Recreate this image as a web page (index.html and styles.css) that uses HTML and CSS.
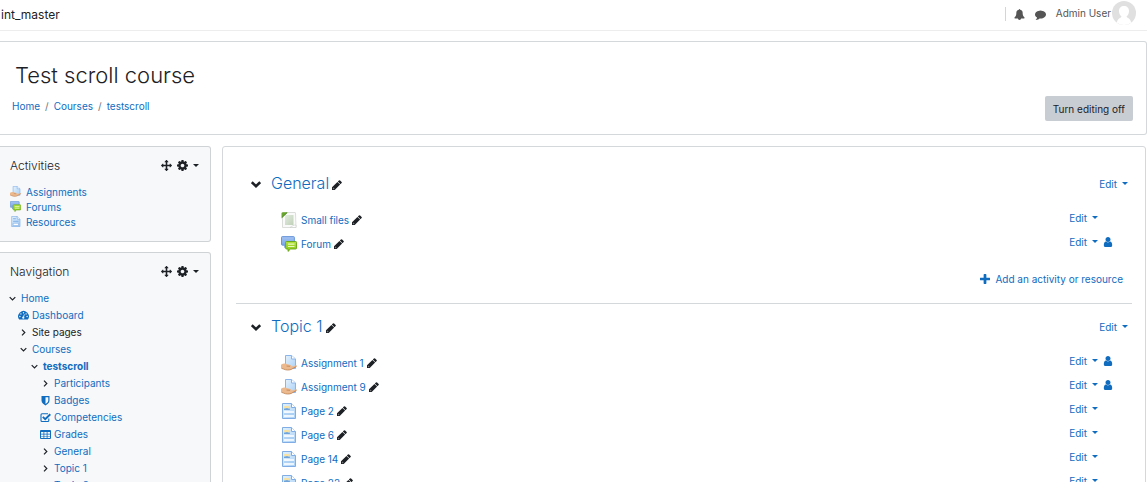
FILE: index.html
```html
<!DOCTYPE html>
<html lang="en">

<head>
    <meta charset="UTF-8">
    <title>Test scroll course</title>
    <link rel="stylesheet" href="styles.css">
</head>

<body>

    <!-- icons used on the page -->
    <svg class="sprite" aria-hidden="true">
        <defs>
            <linearGradient id="blue" x1="0" y1="0" x2="1" y2="1">
                <stop offset="0" stop-color="#e4f2fd" />
                <stop offset="1" stop-color="#a9d0f5" />
            </linearGradient>
            <linearGradient id="bubble" x1="0" y1="0" x2="0" y2="1">
                <stop offset="0" stop-color="#a3c3f3" />
                <stop offset="1" stop-color="#6f9fe3" />
            </linearGradient>
            <linearGradient id="lime" x1="0" y1="0" x2="0" y2="1">
                <stop offset="0" stop-color="#b5e53c" />
                <stop offset="1" stop-color="#86c51a" />
            </linearGradient>
            <linearGradient id="file" x1="0" y1="0" x2="1" y2="1">
                <stop offset="0" stop-color="#e3ecdf" />
                <stop offset="1" stop-color="#bfd0b8" />
            </linearGradient>
        </defs>
        <symbol id="bell" viewBox="0 0 1792 1792"><path d="M1728 1408q0 52-38 90t-90 38h-448q0 106-75 181t-181 75-181-75-75-181h-448q-52 0-90-38t-38-90q50-42 91-88t85-119.500 74.500-158.500 50-206 19.500-260q0-152 117-282.500t307-158.500q-8-19-8-39 0-40 28-68t68-28 68 28 28 68q0 20-8 39 190 28 307 158.500t117 282.500q0 139 19.500 260t50 206 74.500 158.500 85 119.500 91 88z" /></symbol>
        <symbol id="comment" viewBox="0 0 1792 1792"><path d="M1792 896q0 174-120 321.500t-326 233-450 85.500q-70 0-145-8-198 175-460 242-49 14-114 22-17 2-30.500-9t-17.500-29v-1q-3-4-.5-12t2-10 4.500-9.500l6-9 7-8.500 8-9q7-8 31-34.500t34.500-38 31-39.500 32.500-51 27-59 26-76q-157-89-247.500-220t-90.500-281q0-130 71-248.500t191-204.500 286-136.500 348-50.500 348 50.500 286 136.500 191 204.500 71 248.500z" /></symbol>
        <symbol id="move" viewBox="0 0 1792 1792"><path d="M1792 896q0 26-19 45l-256 256q-19 19-45 19t-45-19-19-45v-128h-384v384h128q26 0 45 19t19 45-19 45l-256 256q-19 19-45 19t-45-19l-256-256q-19-19-19-45t19-45 45-19h128v-384h-384v128q0 26-19 45t-45 19-45-19l-256-256q-19-19-19-45t19-45l256-256q19-19 45-19t45 19 19 45v128h384v-384h-128q-26 0-45-19t-19-45 19-45l256-256q19-19 45-19t45 19l256 256q19 19 19 45t-19 45-45 19h-128v384h384v-128q0-26 19-45t45-19 45 19l256 256q19 19 19 45z" /></symbol>
        <symbol id="cog" viewBox="128 128 1536 1536"><path d="M1152 896q0-106-75-181t-181-75-181 75-75 181 75 181 181 75 181-75 75-181zm512-109v222q0 12-8 23t-20 13l-185 28q-19 54-39 91 35 50 107 138 10 12 10 25t-9 23q-27 37-99 108t-94 71q-12 0-26-9l-138-108q-44 23-91 38-16 136-29 186-7 28-36 28h-222q-14 0-24.500-8.500t-11.500-21.500l-28-184q-49-16-90-37l-141 107q-10 9-25 9-14 0-25-11-126-114-165-168-7-10-7-23 0-12 8-23 15-21 51-66.500t54-70.500q-27-50-41-99l-183-27q-13-2-21-12.500t-8-23.500v-222q0-12 8-23t19-13l186-28q14-46 39-92-40-57-107-138-10-12-10-24 0-10 9-23 26-36 98.500-107.500t94.500-71.500q13 0 26 10l138 107q44-23 91-38 16-136 29-186 7-28 36-28h222q14 0 24.500 8.500t11.500 21.500l28 184q49 16 90 37l142-107q9-9 24-9 13 0 25 10 129 119 165 170 7 8 7 22 0 12-8 23-15 21-51 66.500t-54 70.500q26 50 41 98l183 28q13 2 21 12.500t8 23.500z" /></symbol>
        <symbol id="user" viewBox="128 128 1536 1536"><path d="M1536 1399q0 109-62.500 187t-150.500 78h-854q-88 0-150.500-78t-62.500-187q0-85 8.500-160.500t31.500-152 58.500-131 94-89 134.500-34.500q131 128 313 128t313-128q76 0 134.500 34.500t94 89 58.500 131 31.500 152 8.500 160.500zm-256-887q0 159-112.500 271.500t-271.500 112.500-271.500-112.500-112.500-271.500 112.500-271.500 271.500-112.500 271.500 112.500 112.500 271.500z" /></symbol>
        <symbol id="pencil" viewBox="128 128 1536 1536"><path d="M430 1536l60-60-174-174-60 60v46h128v128h46zM960 416l416 416-832 832h-416v-416zm683 96q0 53-37 90l-166 166-416-416 166-165q36-38 90-38 53 0 91 38l235 234q37 39 37 91z" /></symbol>
        <symbol id="plus" viewBox="192 128 1408 1408"><path d="M1600 736v192q0 40-28 68t-68 28h-416v416q0 40-28 68t-68 28h-192q-40 0-68-28t-28-68v-416h-416q-40 0-68-28t-28-68v-192q0-40 28-68t68-28h416v-416q0-40 28-68t68-28h192q40 0 68 28t28 68v416h416q40 0 68 28t28 68z" /></symbol>
        <symbol id="chevron" viewBox="0 0 10 10"><path d="M.8 3.200L5 7.300L9.200 3.200" fill="none" stroke="currentColor" stroke-width="2.600" /></symbol>
        <symbol id="down" viewBox="0 0 11 11"><path d="M2.700 4.200L5.500 7L8.300 4.200" fill="none" stroke="currentColor" stroke-width="1.200" /></symbol>
        <symbol id="right" viewBox="0 0 11 11"><path d="M4 2.700L6.800 5.500L4 8.300" fill="none" stroke="currentColor" stroke-width="1.200" /></symbol>
        <symbol id="dashboard" viewBox="0 0 11 11">
            <path d="M1.200 9.500A5.300 5.300 0 1 1 9.800 9.500Z" />
            <g fill="#f7f8fa"><circle cx="1.900" cy="6.500" r=".7" /><circle cx="2.900" cy="3.900" r=".7" /><circle cx="5.500" cy="2.700" r=".7" /><circle cx="8.100" cy="3.900" r=".7" /><circle cx="9.100" cy="6.500" r=".7" /></g>
            <path d="M5.300 7.600L6.400 4.300" stroke="#f7f8fa" stroke-width=".8" /><circle cx="5.300" cy="7.700" r="1.100" fill="#f7f8fa" />
        </symbol>
        <symbol id="shield" viewBox="0 0 11 11"><path fill-rule="evenodd" d="M1.500 1H9.500V5.500C9.500 8 7.200 9.500 5.500 10.400C3.800 9.500 1.500 8 1.500 5.500ZM5.500 2.200V9C7 8 8.300 7 8.300 5.500V2.200Z" /></symbol>
        <symbol id="check" viewBox="0 0 11 11"><path d="M8.800 6.500V8.500Q8.800 9.500 7.800 9.500H2Q1 9.500 1 8.500V2.800Q1 1.800 2 1.800H8" fill="none" stroke="currentColor" stroke-width="1.100" /><path d="M2.800 4.900L5.200 7.200L10.300 2.200" fill="none" stroke="currentColor" stroke-width="1.900" /></symbol>
        <symbol id="table" viewBox="0 0 11 11"><path fill-rule="evenodd" d="M1 1H10Q11 1 11 2V9Q11 10 10 10H1Q0 10 0 9V2Q0 1 1 1ZM1 3V4.700H3.500V3ZM4.300 3V4.700H6.700V3ZM7.500 3V4.700H10V3ZM1 5.400V6.900H3.500V5.400ZM4.300 5.400V6.900H6.700V5.400ZM7.500 5.400V6.900H10V5.400ZM1 7.600V9.100H3.500V7.600ZM4.300 7.600V9.100H6.700V7.600ZM7.500 7.600V9.100H10V7.600Z" /></symbol>
        <symbol id="assign" viewBox="0 0 16 16">
            <path d="M4.500 .5H10.500L14.500 4V13.500H4.500Z" fill="url(#blue)" stroke="#8ab4ea" />
            <path d="M10.500 .5V4H14.500" fill="#fff" stroke="#8ab4ea" />
            <path d="M0 9.700C2 8.500 4 8.300 5.500 9L9.500 10C10.400 10.500 10 11.300 9 11.300L12 11.200L15 10.200C16.200 10.200 16 11.200 15.200 11.700L10.500 14.500C8 15.500 4.500 15.200 2.500 14L0 13.300Z" fill="#ecb98e" />
            <path d="M.5 13.300L2.700 14.100C5 15.300 8 15.300 10.300 14.400L15.500 11.300M5.500 11L9 11.300" fill="none" stroke="#bd8356" stroke-width=".8" />
        </symbol>
        <symbol id="forum" viewBox="0 0 16 16">
            <path d="M1.300 .6H12.500Q13.400 .6 13.400 1.500V8.500H6L3.800 11.500V9.200H1.300Q.5 9.200 .5 8.300V1.500Q.5 .6 1.300 .6Z" fill="url(#bubble)" stroke="#608fd5" stroke-width=".9" />
            <path d="M5.500 5.500H14.800Q15.500 5.500 15.500 6.300V12.200Q15.500 13 14.800 13H9.500L7 15.400V13H5.500Q4.600 13 4.600 12.200V6.300Q4.600 5.500 5.500 5.500Z" fill="url(#lime)" stroke="#64a513" stroke-width=".9" />
            <path d="M7 8.200H13.500M7 10.500H13.500" stroke="#e8f8bd" stroke-width="1.200" />
        </symbol>
        <symbol id="page" viewBox="0 0 16 16">
            <path d="M1.500 .5H10.500L14.500 4.500V15.500H1.500Z" fill="url(#blue)" stroke="#80ade5" />
            <path d="M10.500 .5V4.500H14.500" fill="#fff" stroke="#80ade5" />
            <path d="M3 3H9V7H3Z" fill="#a8cff2" /><path d="M3 3H9V4.500L6 6L3 5Z" fill="#f7e2a5" /><path d="M3 6L6 5L9 6.500V7H3Z" fill="#6fa3da" />
            <path d="M3 9H13M3 13H13" stroke="#fff" stroke-width="1.500" /><path d="M3 11H13" stroke="#9cc6ee" />
        </symbol>
        <symbol id="resource" viewBox="0 0 16 16">
            <path d="M2.500 .5H10.500L14.500 4.500V15.500H2.500Z" fill="url(#blue)" stroke="#80ade5" />
            <path d="M10.500 .5V4.500H14.500" fill="#fff" stroke="#80ade5" />
            <path d="M4.500 4H8.500M4.500 7.500H12.500" stroke="#80ade5" stroke-width="1.500" /><path d="M4.500 10.500H12.500V14H4.500Z" fill="#fff" stroke="#80ade5" />
        </symbol>
        <symbol id="smallfile" viewBox="0 0 16 16">
            <path d="M2 .5H14Q14.500 .5 14.500 1L15 15.500H1.500V1Z" fill="#fafafa" stroke="#dcdedb" />
            <path d="M4 3H12.500V13H4Z" fill="url(#file)" />
            <path d="M9 15.500C11 14 13 13 15 13V15.500Z" fill="#fff" stroke="#c8cbc7" stroke-width=".6" />
            <path d="M.5 6V1.500Q.5 .3 2 .3H6.500Z" fill="#69a62e" /><path d="M.8 5.700L6.200 .6" stroke="#3f7d12" stroke-width=".9" />
        </symbol>
        <symbol id="avatar" viewBox="0 0 24 24">
            <circle cx="12" cy="12" r="12" fill="#e0e0e0" />
            <path d="M12 5C15 5 17 7 17 10C17 12.500 16 14.500 14.500 15.500C14.700 17 19 17.500 19 21.700Q16 24 12 24T5 21.700C5 17.500 9.300 17 9.500 15.500C8 14.500 7 12.500 7 10C7 7 9 5 12 5Z" fill="#fff" />
        </symbol>
    </svg>

    <nav class="topbar">
        <a class="brand" href="#">int_master</a>
        <div class="usermenu">
            <button class="notice" aria-label="Notifications"><svg><use href="#bell" /></svg></button>
            <button class="notice" aria-label="Messages"><svg><use href="#comment" /></svg></button>
            <a class="user" href="#"><span>Admin User</span><svg class="avatar"><use href="#avatar" /></svg></a>
        </div>
    </nav>

    <header class="page-header">
        <h1>Test scroll course</h1>
        <div class="header-row">
            <ol class="breadcrumb">
                <li><a href="#">Home</a></li>
                <li><a href="#">Courses</a></li>
                <li><a href="#">testscroll</a></li>
            </ol>
            <button class="editing">Turn editing off</button>
        </div>
    </header>

    <div class="page-content">
        <aside class="blocks">
            <section class="block">
                <div class="block-head">
                    <h2>Activities</h2>
                    <button aria-label="Move Activities block"><svg><use href="#move" /></svg></button>
                    <button class="caret" aria-label="Actions"><svg><use href="#cog" /></svg></button>
                </div>
                <ul class="modules">
                    <li><svg><use href="#assign" /></svg><a href="#">Assignments</a></li>
                    <li><svg><use href="#forum" /></svg><a href="#">Forums</a></li>
                    <li><svg><use href="#resource" /></svg><a href="#">Resources</a></li>
                </ul>
            </section>

            <section class="block">
                <div class="block-head">
                    <h2>Navigation</h2>
                    <button aria-label="Move Navigation block"><svg><use href="#move" /></svg></button>
                    <button class="caret" aria-label="Actions"><svg><use href="#cog" /></svg></button>
                </div>
                <ul class="tree">
                    <li><svg><use href="#down" /></svg><a href="#">Home</a>
                        <ul>
                            <li><svg class="blue"><use href="#dashboard" /></svg><a href="#">Dashboard</a></li>
                            <li><svg><use href="#right" /></svg><span>Site pages</span></li>
                            <li><svg><use href="#down" /></svg><a href="#">Courses</a>
                                <ul>
                                    <li><svg><use href="#down" /></svg><a class="current" href="#">testscroll</a>
                                        <ul>
                                            <li><svg><use href="#right" /></svg><a href="#">Participants</a></li>
                                            <li><svg class="blue"><use href="#shield" /></svg><a href="#">Badges</a></li>
                                            <li><svg class="blue"><use href="#check" /></svg><a href="#">Competencies</a></li>
                                            <li><svg class="blue"><use href="#table" /></svg><a href="#">Grades</a></li>
                                            <li><svg><use href="#right" /></svg><a href="#">General</a></li>
                                            <li><svg><use href="#right" /></svg><a href="#">Topic 1</a></li>
                                            <li><svg><use href="#right" /></svg><a href="#">Topic 2</a></li>
                                        </ul>
                                    </li>
                                </ul>
                            </li>
                        </ul>
                    </li>
                </ul>
            </section>
        </aside>

        <main class="course">
            <section class="topic">
                <div class="topic-head">
                    <button class="toggle" aria-label="Collapse General"><svg><use href="#chevron" /></svg></button>
                    <h3><a href="#">General</a></h3>
                    <button class="rename" aria-label="Edit section name"><svg><use href="#pencil" /></svg></button>
                    <button class="edit caret">Edit</button>
                </div>
                <ul class="activities">
                    <li>
                        <div class="activity"><svg class="modicon"><use href="#smallfile" /></svg><a href="#">Small files</a><button class="rename" aria-label="Edit title"><svg><use href="#pencil" /></svg></button></div>
                        <button class="edit caret">Edit</button><span class="group"></span>
                    </li>
                    <li>
                        <div class="activity"><svg class="modicon"><use href="#forum" /></svg><a href="#">Forum</a><button class="rename" aria-label="Edit title"><svg><use href="#pencil" /></svg></button></div>
                        <button class="edit caret">Edit</button><button class="group" aria-label="No groups"><svg><use href="#user" /></svg></button>
                    </li>
                </ul>
                <a class="add" href="#"><svg><use href="#plus" /></svg>Add an activity or resource</a>
            </section>

            <section class="topic">
                <div class="topic-head">
                    <button class="toggle" aria-label="Collapse Topic 1"><svg><use href="#chevron" /></svg></button>
                    <h3><a href="#">Topic 1</a></h3>
                    <button class="rename" aria-label="Edit topic name"><svg><use href="#pencil" /></svg></button>
                    <button class="edit caret">Edit</button>
                </div>
                <ul class="activities">
                    <li>
                        <div class="activity"><svg class="modicon"><use href="#assign" /></svg><a href="#">Assignment 1</a><button class="rename" aria-label="Edit title"><svg><use href="#pencil" /></svg></button></div>
                        <button class="edit caret">Edit</button><button class="group" aria-label="No groups"><svg><use href="#user" /></svg></button>
                    </li>
                    <li>
                        <div class="activity"><svg class="modicon"><use href="#assign" /></svg><a href="#">Assignment 9</a><button class="rename" aria-label="Edit title"><svg><use href="#pencil" /></svg></button></div>
                        <button class="edit caret">Edit</button><button class="group" aria-label="No groups"><svg><use href="#user" /></svg></button>
                    </li>
                    <li>
                        <div class="activity"><svg class="modicon"><use href="#page" /></svg><a href="#">Page 2</a><button class="rename" aria-label="Edit title"><svg><use href="#pencil" /></svg></button></div>
                        <button class="edit caret">Edit</button><span class="group"></span>
                    </li>
                    <li>
                        <div class="activity"><svg class="modicon"><use href="#page" /></svg><a href="#">Page 6</a><button class="rename" aria-label="Edit title"><svg><use href="#pencil" /></svg></button></div>
                        <button class="edit caret">Edit</button><span class="group"></span>
                    </li>
                    <li>
                        <div class="activity"><svg class="modicon"><use href="#page" /></svg><a href="#">Page 14</a><button class="rename" aria-label="Edit title"><svg><use href="#pencil" /></svg></button></div>
                        <button class="edit caret">Edit</button><span class="group"></span>
                    </li>
                    <li>
                        <div class="activity"><svg class="modicon"><use href="#page" /></svg><a href="#">Page 22</a><button class="rename" aria-label="Edit title"><svg><use href="#pencil" /></svg></button></div>
                        <button class="edit caret">Edit</button><span class="group"></span>
                    </li>
                </ul>
            </section>
        </main>
    </div>

</body>

</html>
```

FILE: styles.css
```css
* {
    box-sizing: border-box;
}

body {
    margin: 0;
    height: 100vh;
    overflow: hidden;
    font-family: Inter, "Liberation Sans", sans-serif;
    font-size: 10px;
    color: #1d2125;
    background-color: white;
}

h1, h2, h3, ul, ol {
    margin: 0;
    padding: 0;
    list-style: none;
}

h1, h2, h3 {
    font-weight: 300;
}

a {
    color: #0f6cbf;
    text-decoration: none;
}

button {
    display: flex;
    align-items: center;
    padding: 0;
    border: 0;
    background: none;
    font: inherit;
    color: inherit;
}

svg {
    display: block;
    flex: none;
    width: 10px;
    height: 10px;
    fill: currentColor;
}

.sprite {
    position: absolute;
    width: 0;
    height: 0;
}

/* small arrow after menu buttons */
.caret::after {
    content: "";
    margin: 0 0 1px 5px;
    border: 3px solid transparent;
    border-top-color: currentColor;
    border-bottom: 0;
}

/* top bar */
.topbar {
    display: flex;
    justify-content: space-between;
    height: 31px;
    padding: 0 11px 0 1px;
    border-bottom: 1px solid #ededed;
}

.brand {
    font-size: 12px;
    line-height: 30px;
    color: #1d2125;
}

.usermenu {
    display: flex;
    height: 28px;
    align-items: center;
    color: #555;
}

.usermenu::before {
    content: "";
    height: 14px;
    border-left: 1px solid #d5d5d5;
}

.notice {
    margin-left: 8px;
}

.notice + .notice {
    margin: 0 10px;
}

.notice svg {
    width: 11px;
    height: 11px;
}

.user {
    display: flex;
    align-items: center;
    gap: 1px;
    padding-bottom: 2px;
    color: #555;
}

.avatar {
    width: 24px;
    height: 24px;
}

/* page header */
.page-header {
    margin-top: 10px;
    padding: 19px 13px 13px 12px;
    border: 1px solid #d5d8da;
    border-left: 0;
    border-radius: 0 3px 3px 0;
}

.page-header h1 {
    padding-left: 3px;
    font-size: 22px;
    line-height: 28px;
}

.header-row {
    display: flex;
    justify-content: space-between;
    align-items: flex-end;
    margin-top: 7px;
}

.breadcrumb {
    display: flex;
    align-self: flex-start;
    line-height: 20px;
}

.breadcrumb li + li::before {
    content: "/";
    margin: 0 5px;
    color: #6a737b;
}

.editing {
    height: 25px;
    padding: 0 8px;
    border-radius: 2px;
    background-color: #c8cdd3;
}

/* columns */
.page-content {
    display: grid;
    grid-template-columns: 211px 1fr;
    gap: 11px;
    margin-top: 11px;
    padding-right: 1px;
}

.block {
    margin-bottom: 10px;
    padding: 9px 10px 12px;
    border: 1px solid #d0d3d6;
    border-left: 0;
    border-radius: 0 3px 3px 0;
    background-color: #f7f8fa;
}

.block-head {
    display: flex;
    align-items: center;
    gap: 5px;
    height: 19px;
    margin-bottom: 9px;
    padding-right: 1px;
}

.block-head h2 {
    flex: 1;
    font-size: 12px;
}

.block-head svg {
    width: 11px;
    height: 11px;
}

.modules li {
    display: flex;
    align-items: center;
    gap: 5px;
    height: 15px;
}

.modules svg {
    width: 11px;
    height: 11px;
}

.tree {
    margin-left: -3px;
    line-height: 17px;
}

.tree li {
    display: grid;
    grid-template-columns: 11px 1fr;
    column-gap: 3px;
    align-items: center;
}

.tree svg {
    width: 11px;
    height: 11px;
}

.tree .blue {
    color: #0f6cbf;
}

.tree ul {
    grid-column: 1 / -1;
    padding-left: 11px;
}

.current {
    font-weight: bold;
}

/* course */
.course {
    padding: 14px 13px;
    border: 1px solid #d5d8da;
    border-radius: 3px;
}

.topic {
    padding: 10px 0 14px;
}

.topic + .topic {
    border-top: 1px solid #d5d8da;
}

.topic-head {
    display: flex;
    align-items: center;
    height: 24px;
    margin-bottom: 11px;
    padding: 0 4px 0 15px;
}

.toggle {
    width: 20px;
    padding-top: 2px;
}

.topic-head h3 {
    font-size: 16px;
}

.rename {
    margin-left: 3px;
}

.topic-head .rename {
    padding-top: 3px;
}

.topic-head .edit {
    margin-left: auto;
    padding-top: 2px;
}

.edit,
.group {
    color: #0f6cbf;
}

.activities li {
    display: flex;
    height: 24px;
    padding: 0 19px 0 45px;
}

.activity {
    display: flex;
    flex: 1;
    align-items: center;
    height: 28px;
}

.modicon {
    width: 16px;
    height: 16px;
    margin-right: 4px;
}

.group {
    width: 10px;
    margin-left: 5px;
}

.add {
    display: flex;
    justify-content: flex-end;
    align-items: center;
    gap: 5px;
    height: 20px;
    margin: 15px 9px 0 0;
}
```
